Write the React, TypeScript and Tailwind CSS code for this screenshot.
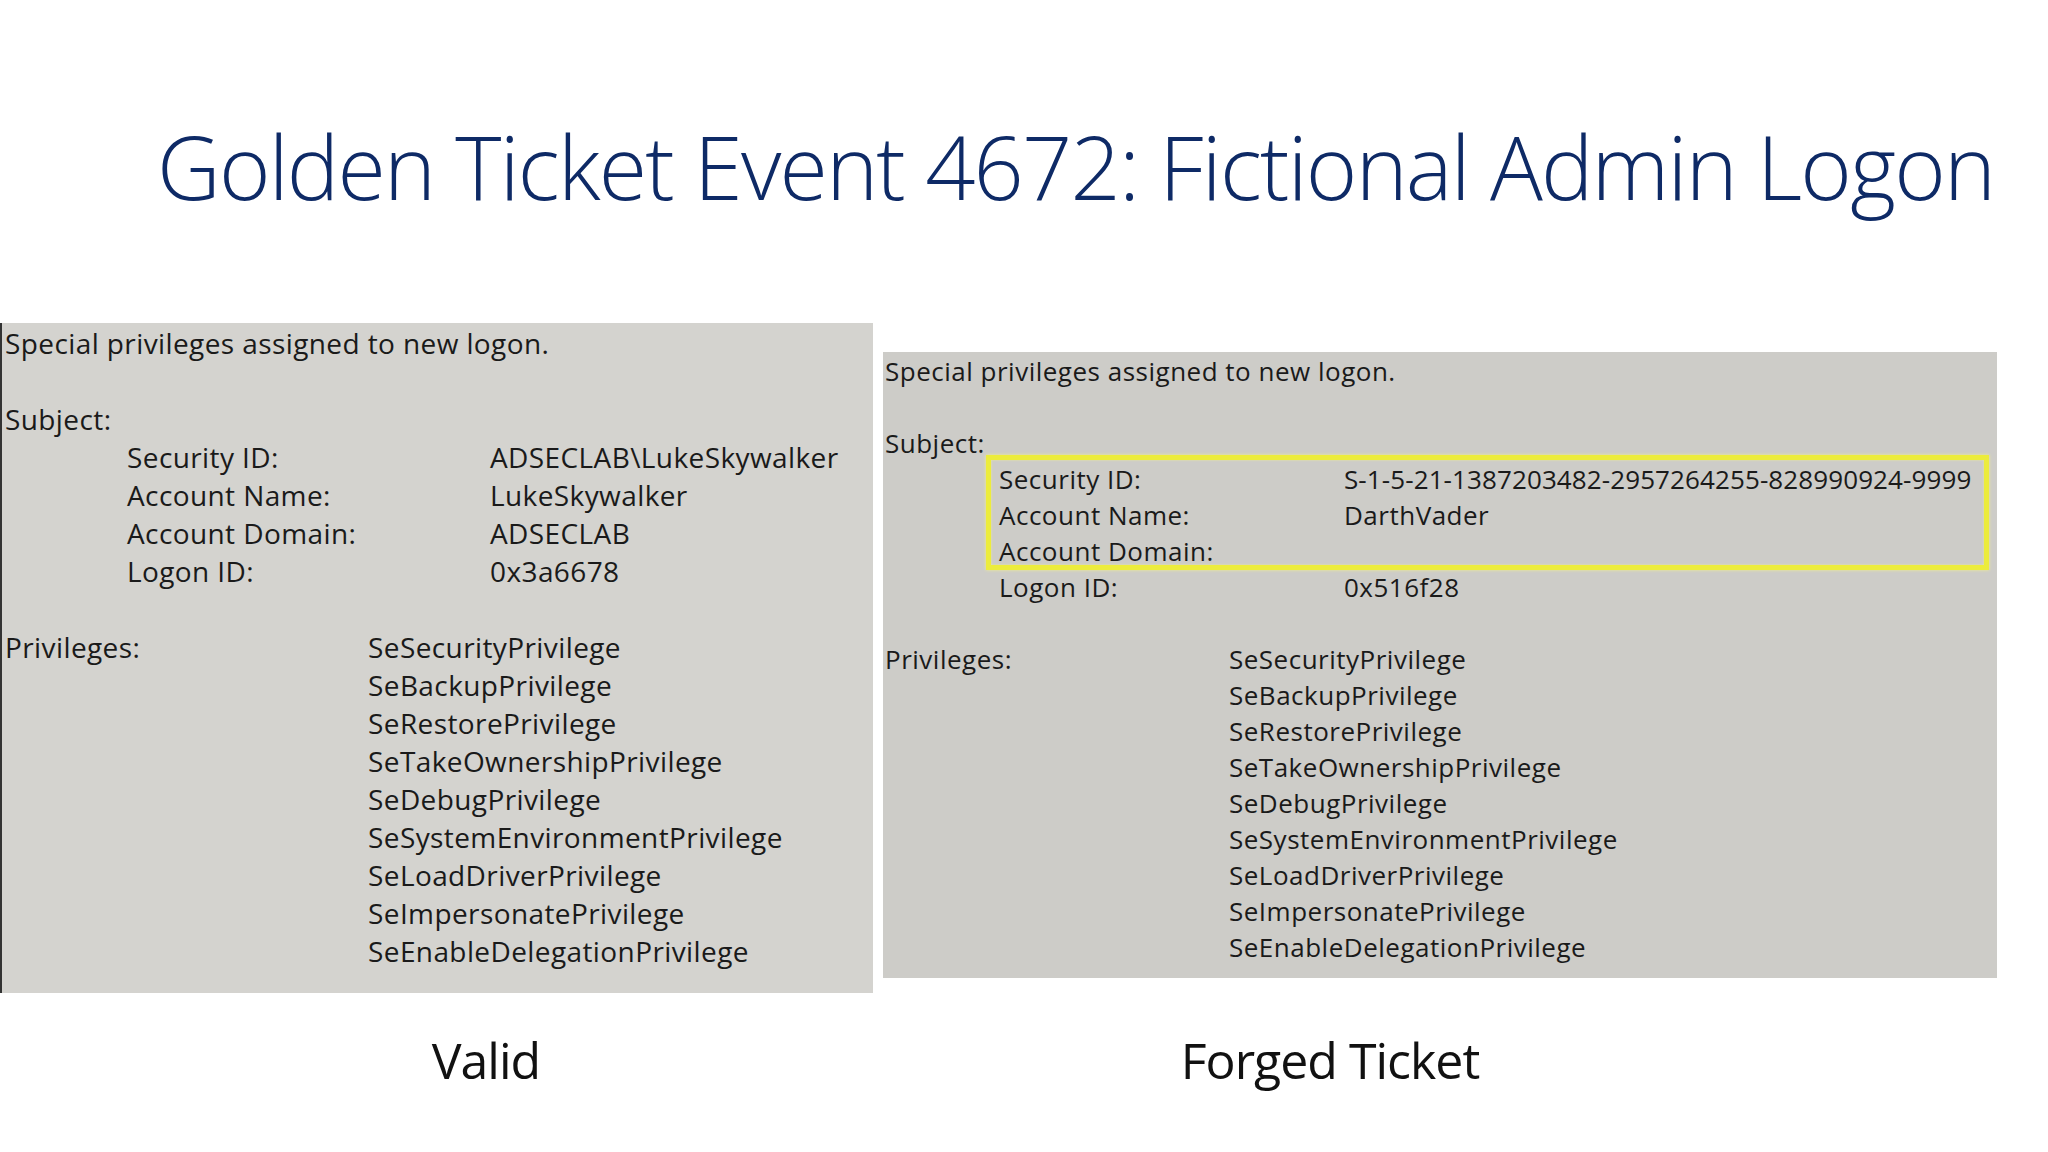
import React from 'react';

const privileges = [
  'SeSecurityPrivilege',
  'SeBackupPrivilege',
  'SeRestorePrivilege',
  'SeTakeOwnershipPrivilege',
  'SeDebugPrivilege',
  'SeSystemEnvironmentPrivilege',
  'SeLoadDriverPrivilege',
  'SeImpersonatePrivilege',
  'SeEnableDelegationPrivilege',
];

const validSubject = [
  ['Security ID:', 'ADSECLAB\\LukeSkywalker'],
  ['Account Name:', 'LukeSkywalker'],
  ['Account Domain:', 'ADSECLAB'],
  ['Logon ID:', '0x3a6678'],
];

const forgedSubject = [
  ['Security ID:', 'S-1-5-21-1387203482-2957264255-828990924-9999'],
  ['Account Name:', 'DarthVader'],
  ['Account Domain:', ''],
  ['Logon ID:', '0x516f28'],
];

function ValidPanel() {
  return (
    <div className="w-[873px] bg-[#d4d3cf] border-l-[2px] border-[#333] pt-[1px] pb-[23px] pl-[3px] text-[28px] leading-[38px] text-[#1a1a1a] tracking-[0.4px]">
      <div>Special privileges assigned to new logon.</div>
      <div className="h-[38px]" />
      <div>Subject:</div>
      {validSubject.map(([label, value]) => (
        <div key={label} className="flex">
          <span className="w-[485px] pl-[122px] shrink-0">{label}</span>
          <span>{value}</span>
        </div>
      ))}
      <div className="h-[38px]" />
      <div className="flex">
        <span className="w-[363px] shrink-0">Privileges:</span>
        <div>
          {privileges.map((p) => (
            <div key={p}>{p}</div>
          ))}
        </div>
      </div>
    </div>
  );
}

function ForgedPanel() {
  return (
    <div className="relative w-[1114px] bg-[#cdccc8] pt-[1px] pb-[13px] pl-[2px] text-[26px] leading-[36px] text-[#1a1a1a] tracking-[0.5px]">
      <div>Special privileges assigned to new logon.</div>
      <div className="h-[36px]" />
      <div>Subject:</div>
      {forgedSubject.map(([label, value], i) => (
        <div key={label} className="flex">
          <span className="w-[459px] pl-[114px] shrink-0">{label}</span>
          <span className={i === 0 ? 'tracking-[0.1px]' : ''}>{value}</span>
        </div>
      ))}
      <div className="h-[36px]" />
      <div className="flex">
        <span className="w-[344px] shrink-0">Privileges:</span>
        <div>
          {privileges.map((p) => (
            <div key={p}>{p}</div>
          ))}
        </div>
      </div>
      {/* highlight box */}
      <div className="absolute left-[103px] top-[103px] w-[1003px] h-[115px] border-[5px] border-[#ecec3c] shadow-[0_0_3px_#f2f28a,inset_0_0_2px_#f2f28a]" />
    </div>
  );
}

export default function App() {
  return (
    <div className="w-[2048px] h-[1152px] bg-white overflow-hidden font-['Open_Sans',sans-serif]">
      <div className="h-[323px] pt-[122px] pl-[157px]">
        <h1 className="text-[88px] leading-none font-light text-[#0e2a66] tracking-[-0.02em] whitespace-nowrap">
          Golden Ticket Event 4672: Fictional Admin Logon
        </h1>
      </div>
      <div className="flex items-start">
        <ValidPanel />
        <div className="ml-[10px] mt-[29px]">
          <ForgedPanel />
        </div>
      </div>
      <div className="flex pt-[42px] text-[50px] leading-none text-[#111] tracking-[-0.02em]">
        <div className="w-[972px] text-center">Valid</div>
        <div className="w-[716px] text-center">Forged Ticket</div>
      </div>
    </div>
  );
}
